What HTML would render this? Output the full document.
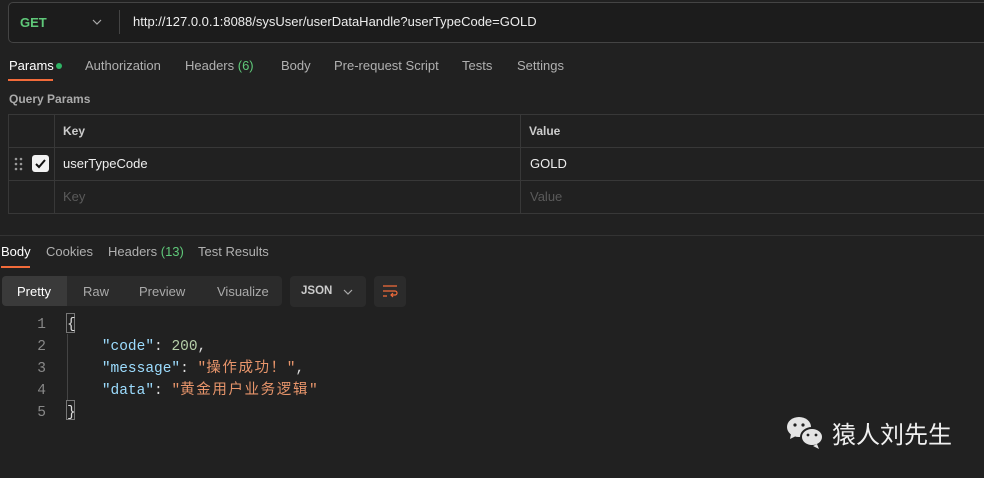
<!DOCTYPE html>
<html><head><meta charset="utf-8"><style>
*{margin:0;padding:0;box-sizing:border-box}
body{width:984px;height:478px;background:#212121;font-family:"Liberation Sans",sans-serif;color:#d0d0d0;position:relative;overflow:hidden;font-size:13px}
.a{position:absolute;white-space:nowrap}
.mono{font-family:"Liberation Mono","Noto Sans CJK SC",monospace;font-size:14.5px}
.cj{letter-spacing:1.6px}
</style></head><body>
<div class="a" style="left:8px;top:2px;width:990px;height:41px;border:1px solid #444;border-radius:5px;background:#1c1c1c"></div>
<div class="a" style="left:20px;top:15px;color:#5fc879;font-weight:bold;font-size:13px">GET</div>
<svg class="a" style="left:92px;top:18px" width="10" height="8"><path d="M1 2l4 4 4-4" stroke="#aaa" fill="none" stroke-width="1.2"/></svg>
<div class="a" style="left:119px;top:10px;width:1px;height:24px;background:#444"></div>
<div class="a" style="left:133px;top:14px;color:#eee;font-size:13px">http://127.0.0.1:8088/sysUser/userDataHandle?userTypeCode=GOLD</div>

<div class="a" style="left:9px;top:58px;color:#fff">Params</div>
<div class="a" style="left:56px;top:63px;width:6px;height:6px;border-radius:3px;background:#2fb465"></div>
<div class="a" style="left:8px;top:79px;width:45px;height:2px;background:#f26b3a"></div>
<div class="a" style="left:85px;top:58px;color:#b0b0b0">Authorization</div>
<div class="a" style="left:185px;top:58px;color:#b0b0b0">Headers <span style="color:#5fc879">(6)</span></div>
<div class="a" style="left:281px;top:58px;color:#b0b0b0">Body</div>
<div class="a" style="left:334px;top:58px;color:#b0b0b0">Pre-request Script</div>
<div class="a" style="left:462px;top:58px;color:#b0b0b0">Tests</div>
<div class="a" style="left:517px;top:58px;color:#b0b0b0">Settings</div>
<div class="a" style="left:9px;top:92px;color:#aaa;font-weight:bold;font-size:12px">Query Params</div>

<div class="a" style="left:8px;top:114px;width:990px;height:100px;border:1px solid #383838"></div>
<div class="a" style="left:8px;top:147px;width:990px;height:1px;background:#383838"></div>
<div class="a" style="left:8px;top:180px;width:990px;height:1px;background:#383838"></div>
<div class="a" style="left:54px;top:114px;width:1px;height:100px;background:#383838"></div>
<div class="a" style="left:520px;top:114px;width:1px;height:100px;background:#383838"></div>
<div class="a" style="left:63px;top:124px;color:#ccc;font-weight:bold;font-size:12px">Key</div>
<div class="a" style="left:529px;top:124px;color:#ccc;font-weight:bold;font-size:12px">Value</div>
<svg class="a" style="left:14px;top:157px" width="10" height="14" fill="#999"><circle cx="2" cy="2" r="1.3"/><circle cx="7" cy="2" r="1.3"/><circle cx="2" cy="7" r="1.3"/><circle cx="7" cy="7" r="1.3"/><circle cx="2" cy="12" r="1.3"/><circle cx="7" cy="12" r="1.3"/></svg>
<div class="a" style="left:32px;top:155px;width:17px;height:17px;border-radius:3px;background:#f2f2f2"></div>
<svg class="a" style="left:32px;top:155px" width="17" height="17"><path d="M4 9l3 3 6-7" stroke="#111" stroke-width="2" fill="none"/></svg>
<div class="a" style="left:63px;top:156px;color:#eee">userTypeCode</div>
<div class="a" style="left:530px;top:156px;color:#eee">GOLD</div>
<div class="a" style="left:63px;top:189px;color:#5a5a5a">Key</div>
<div class="a" style="left:530px;top:189px;color:#5a5a5a">Value</div>

<div class="a" style="left:0;top:235px;width:984px;height:1px;background:#333"></div>
<div class="a" style="left:1px;top:244px;color:#fff">Body</div>
<div class="a" style="left:1px;top:266px;width:29px;height:2px;background:#f26b3a"></div>
<div class="a" style="left:46px;top:244px;color:#b0b0b0">Cookies</div>
<div class="a" style="left:108px;top:244px;color:#b0b0b0">Headers <span style="color:#5fc879">(13)</span></div>
<div class="a" style="left:198px;top:244px;color:#b0b0b0">Test Results</div>

<div class="a" style="left:2px;top:276px;width:280px;height:30px;border-radius:4px;background:#2b2b2b"></div>
<div class="a" style="left:2px;top:276px;width:65px;height:30px;border-radius:4px 0 0 4px;background:#3a3a3a"></div>
<div class="a" style="left:17px;top:284px;color:#fff">Pretty</div>
<div class="a" style="left:83px;top:284px;color:#aaa">Raw</div>
<div class="a" style="left:139px;top:284px;color:#aaa">Preview</div>
<div class="a" style="left:217px;top:284px;color:#aaa">Visualize</div>
<div class="a" style="left:290px;top:276px;width:76px;height:31px;border-radius:4px;background:#2b2b2b"></div>
<div class="a" style="left:301px;top:285px;color:#ccc;font-weight:bold;font-size:11.5px">JSON</div>
<svg class="a" style="left:343px;top:288px" width="10" height="8"><path d="M1 2l4 4 4-4" stroke="#aaa" fill="none" stroke-width="1.2"/></svg>
<div class="a" style="left:374px;top:276px;width:32px;height:31px;border-radius:4px;background:#2b2b2b"></div>
<svg class="a" style="left:382px;top:284px" width="16" height="14" stroke="#f26b3a" fill="none" stroke-width="1.2"><path d="M1 2h14M1 7h12a2 2 0 0 1 0 4h-4M11 9l-2 2 2 2M1 12h4"/></svg>

<div class="a mono" style="left:36px;top:314px;color:#888;line-height:22px;text-align:right;width:10px">1<br>2<br>3<br>4<br>5</div>
<div class="a" style="left:66px;top:313px;width:9px;height:20px;border:1px solid #777"></div>
<div class="a" style="left:66px;top:400px;width:9px;height:20px;border:1px solid #777"></div>
<div class="a" style="left:67px;top:334px;width:1px;height:66px;background:#444"></div>
<div class="a mono" style="left:67px;top:314px;line-height:22px;color:#ddd">{<br>&nbsp;&nbsp;&nbsp;&nbsp;<span style="color:#9cdcfe">"code"</span>: <span style="color:#b5cea8">200</span>,<br>&nbsp;&nbsp;&nbsp;&nbsp;<span style="color:#9cdcfe">"message"</span>:&nbsp;<span style="color:#e8956b">"<span class="cj">操作成功！</span>"</span>,<br>&nbsp;&nbsp;&nbsp;&nbsp;<span style="color:#9cdcfe">"data"</span>:&nbsp;<span style="color:#e8956b">"<span class="cj">黄金用户业务逻辑</span>"</span><br>}</div>

<svg class="a" style="left:786px;top:416px" width="40" height="34" fill="#e4e4e4"><ellipse cx="13" cy="11" rx="12" ry="10"/><path d="M5 18l-1 5 6-3z"/><ellipse cx="26" cy="21" rx="11" ry="9" stroke="#212121" stroke-width="2"/><path d="M31 28l2 5-6-3z"/><circle cx="9" cy="9" r="1.6" fill="#212121"/><circle cx="17" cy="9" r="1.6" fill="#212121"/><circle cx="22" cy="19" r="1.4" fill="#212121"/><circle cx="30" cy="19" r="1.4" fill="#212121"/></svg>
<div class="a" style="left:832px;top:417px;color:#f0f0f0;font-size:24px;font-family:'Noto Sans CJK SC',sans-serif;line-height:32px">猿人刘先生</div>
</body></html>
